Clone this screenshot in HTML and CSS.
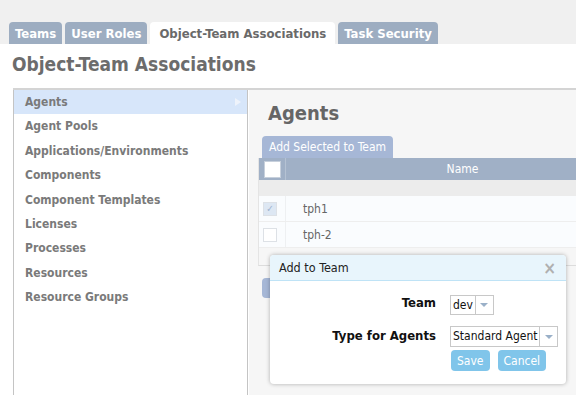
FILE: index.html
```html
<!DOCTYPE html>
<html lang="en">
<head>
    <meta charset="UTF-8">
    <title>Object-Team Associations</title>
    <link rel="stylesheet" href="styles.css">
</head>
<body>
    <div class="tabs">
        <div class="tab">Teams</div>
        <div class="tab">User Roles</div>
        <div class="tab active">Object-Team Associations</div>
        <div class="tab">Task Security</div>
    </div>

    <h1 class="page-title">Object-Team Associations</h1>

    <div class="main">
        <ul class="menu">
            <li class="selected">Agents<span class="arrow"></span></li>
            <li>Agent Pools</li>
            <li>Applications/Environments</li>
            <li>Components</li>
            <li>Component Templates</li>
            <li>Licenses</li>
            <li>Processes</li>
            <li>Resources</li>
            <li>Resource Groups</li>
        </ul>

        <div class="content">
            <h2 class="content-title">Agents</h2>
            <button class="add-btn">Add Selected to Team</button>
            <div class="table">
                <div class="row head">
                    <div class="cell check"><span class="box"></span></div>
                    <div class="cell name">Name</div>
                </div>
                <div class="row filter"></div>
                <div class="row">
                    <div class="cell check"><span class="box small checked">&#10003;</span></div>
                    <div class="cell text">tph1</div>
                </div>
                <div class="row">
                    <div class="cell check"><span class="box small"></span></div>
                    <div class="cell text">tph-2</div>
                </div>
                <div class="row footer"></div>
            </div>
            <button class="hidden-btn"></button>

            <div class="dialog">
                <div class="dialog-head">
                    <span>Add to Team</span>
                    <span class="close">&#215;</span>
                </div>
                <div class="dialog-body">
                    <div class="field">
                        <label>Team</label>
                        <div class="select team-select">
                            <span class="value">dev</span>
                            <span class="caret"></span>
                        </div>
                    </div>
                    <div class="field">
                        <label>Type for Agents</label>
                        <div class="select type-select">
                            <span class="value">Standard Agent</span>
                            <span class="caret"></span>
                        </div>
                    </div>
                    <div class="actions">
                        <button class="dlg-btn save">Save</button>
                        <button class="dlg-btn cancel">Cancel</button>
                    </div>
                </div>
            </div>
        </div>
    </div>
</body>
</html>
```

FILE: styles.css
```css
body {
    margin: 0;
    font-family: "DejaVu Sans Condensed", "DejaVu Sans", sans-serif;
    background-color: #ffffff;
    overflow: hidden;
}

.tabs {
    display: flex;
    align-items: flex-end;
    gap: 3px;
    height: 44px;
    padding-left: 9px;
    background-color: #f0f0f0;
}

.tab {
    height: 22px;
    line-height: 23px;
    padding: 0 6px;
    font-size: 13px;
    font-weight: bold;
    color: #ffffff;
    background-color: #9dadc1;
    border-radius: 4px 4px 0 0;
}

.tab.active {
    background-color: #ffffff;
    color: #6a6a6a;
    padding: 0 9px;
}

.page-title {
    margin: 0;
    padding: 9px 0 0 12px;
    height: 35px;
    font-size: 19px;
    color: #6c6c6c;
}

.main {
    display: flex;
    margin-left: 13px;
    border-top: 2px solid #d4d4d4;
    height: 310px;
}

.menu {
    flex-shrink: 0;
    list-style: none;
    margin: 0;
    padding: 0;
    width: 233px;
    border-left: 1px solid #c4c4c4;
    border-right: 1px solid #c4c4c4;
}

.menu li {
    position: relative;
    height: 24.4px;
    line-height: 24px;
    padding-left: 11px;
    font-size: 12px;
    font-weight: bold;
    color: #7a7a7a;
}

.menu li.selected {
    background-color: #d7e6fa;
}

.arrow {
    position: absolute;
    right: 6px;
    top: 8px;
    border-left: 6px solid #eef3fb;
    border-top: 4px solid transparent;
    border-bottom: 4px solid transparent;
}

.content {
    position: relative;
    flex: 1;
    min-width: 0;
    overflow: hidden;
    background-color: #f6f6f6;
    padding-left: 9px;
    border-left: 1px solid #ffffff;
}

.content-title {
    margin: 0;
    padding: 11px 0 0 10px;
    height: 35px;
    font-size: 20px;
    color: #666666;
}

.add-btn {
    display: block;
    margin-left: 4px;
    height: 22px;
    padding: 0 7px;
    border: none;
    border-radius: 4px 4px 0 0;
    background-color: #a6b7d6;
    color: #ffffff;
    font-family: inherit;
    font-size: 12px;
}

.table {
    width: 380px;
    border-left: 1px solid #e4e4e4;
    border-bottom: 1px solid #dcdcdc;
}

.row {
    display: flex;
    height: 25px;
    background-color: #fafcfe;
    border-bottom: 1px solid #eeeeee;
}

.row.head {
    height: 22px;
    background-color: #a0b0c6;
    border-bottom: none;
}

.row.filter {
    height: 16px;
    background-color: #ececec;
    border-bottom: none;
}

.row.footer {
    height: 17px;
    background-color: #f6f6f6;
    border-bottom: none;
}

.cell.check {
    width: 26px;
    display: flex;
    align-items: center;
    justify-content: center;
    border-right: 1px solid #eef0f2;
}

.row.head .cell.check {
    border-right: 1px solid #b5c2d3;
}

.box {
    width: 15px;
    height: 15px;
    background-color: #ffffff;
    border: 1px solid #c7d0dc;
}

.box.small {
    width: 12px;
    height: 12px;
    margin-right: 4px;
    background-color: #ffffff;
    border: 1px solid #dde1e6;
    font-size: 10px;
    line-height: 12px;
    text-align: center;
    color: #9fb4d0;
}

.box.checked {
    background-color: #dde7f3;
}

.cell.name {
    flex: 1;
    line-height: 22px;
    text-align: center;
    font-size: 12px;
    color: #ffffff;
}

.cell.text {
    line-height: 27px;
    padding-left: 17px;
    font-size: 12px;
    color: #666666;
}

.hidden-btn {
    display: block;
    margin: 12px 0 0 4px;
    width: 40px;
    height: 20px;
    border: none;
    border-radius: 4px;
    background-color: #a6b7d6;
}

.dialog {
    position: absolute;
    left: 21px;
    top: 165px;
    width: 296px;
    height: 129px;
    background-color: #ffffff;
    border-radius: 4px;
    box-shadow: 0 0 4px rgba(0, 0, 0, 0.3);
    overflow: hidden;
}

.dialog-head {
    display: flex;
    justify-content: space-between;
    align-items: center;
    height: 25px;
    padding: 0 10px 0 9px;
    background-color: #e8f5fc;
    border-bottom: 1px solid #bfe3f6;
    font-size: 12.5px;
    color: #222222;
}

.close {
    font-size: 17px;
    font-weight: bold;
    color: #b0b0b0;
}

.dialog-body {
    padding-top: 14px;
}

.field {
    display: flex;
    align-items: flex-start;
    margin-bottom: 13px;
}

.field label {
    width: 166px;
    text-align: right;
    font-size: 13px;
    font-weight: bold;
    color: #111111;
    margin-right: 14px;
}

.select {
    display: flex;
    height: 18px;
    border: 1px solid #c8c8c8;
    background-color: #ffffff;
    font-size: 12px;
    line-height: 18px;
    color: #111111;
}

.value {
    padding: 0 2px;
    border-right: 1px solid #c8c8c8;
}

.caret {
    width: 17px;
    display: flex;
    align-items: center;
    justify-content: center;
}

.caret::after {
    content: "";
    border-top: 4px solid #9ab0c8;
    border-left: 4px solid transparent;
    border-right: 4px solid transparent;
}

.type-select {
    height: 19px;
    line-height: 19px;
    margin-top: -2px;
}

.actions {
    display: flex;
    gap: 8px;
    margin: -10px 0 0 181px;
}

.dlg-btn {
    height: 21px;
    padding: 0 6px;
    border: none;
    border-radius: 4px;
    background-color: #80c5ea;
    color: #ffffff;
    font-family: inherit;
    font-size: 12px;
}
```
